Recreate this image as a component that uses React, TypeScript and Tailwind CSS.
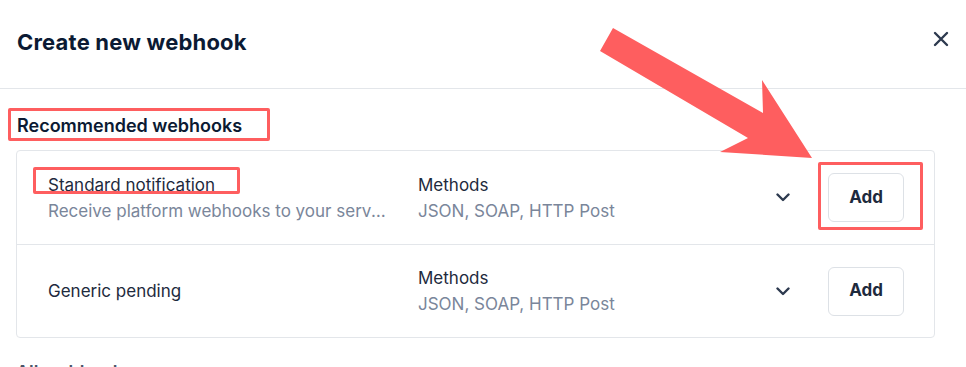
import React from 'react';

const rows = [
  {
    name: 'Standard notification',
    desc: 'Receive platform webhooks to your server for standard events',
    highlight: true,
  },
  { name: 'Generic pending', desc: '', highlight: false },
];

const Chevron = () => (
  <svg width="14" height="9" viewBox="0 0 14 9" fill="none">
    <path d="M1.5 1.5L7 7L12.5 1.5" stroke="#2d3a4f" strokeWidth="2.4" strokeLinecap="round" strokeLinejoin="round" />
  </svg>
);

const CloseIcon = () => (
  <svg width="16" height="16" viewBox="0 0 16 16" fill="none">
    <path d="M2 2L14 14M14 2L2 14" stroke="#2d3a4f" strokeWidth="2.4" strokeLinecap="round" />
  </svg>
);

const App = () => {
  return (
    <main
      className="relative h-[367px] w-[966px] overflow-hidden bg-white text-[#0b1a33]"
      style={{ fontFamily: 'Inter, "Noto Sans", sans-serif' }}
    >
      {/* Header */}
      <header className="flex h-[89px] items-center justify-between border-b border-[#e3e6ea] pl-[17px] pr-[13px]">
        <h1 className="-mt-[4px] text-[22px] font-bold tracking-[0.2px] text-[#0b1a33]">Create new webhook</h1>
        <button className="-mt-[11px] flex h-6 w-6 items-center justify-center">
          <CloseIcon />
        </button>
      </header>

      {/* Recommended */}
      <section className="pl-4 pr-[31px]">
        <div className="relative h-[61px] pl-px pt-[25px]">
          <h2 className="text-[18px] font-semibold leading-[24px] text-[#0b1a33]">Recommended webhooks</h2>
          <div className="absolute left-[-8px] top-[19px] h-[33px] w-[262px] rounded-[2px] border-[3px] border-[#fe5e5f]" />
        </div>

        <div className="rounded-[4px] border border-[#e3e6ea]">
          {rows.map((row, i) => (
            <div
              key={row.name}
              className={`flex h-[93px] items-center pl-[31px] pr-[30px] ${i > 0 ? 'border-t border-[#e3e6ea]' : ''}`}
            >
              <div className="relative w-[370px] pr-[27px]">
                <div className="text-[17px] leading-[26px] text-[#1e2a3d]">{row.name}</div>
                {row.desc && (
                  <div className="truncate text-[17px] leading-[26px] text-[#7a869a]">{row.desc}</div>
                )}
                {row.highlight && (
                  <div className="absolute left-[-15px] top-[-5px] h-[27px] w-[207px] rounded-[2px] border-[3px] border-[#fe5e5f]" />
                )}
              </div>
              <div className="flex-1">
                <div className="text-[17px] leading-[26px] text-[#1e2a3d]">Methods</div>
                <div className="text-[17px] leading-[26px] text-[#7a869a]">JSON, SOAP, HTTP Post</div>
              </div>
              <div className="mr-[38px] flex items-center">
                <Chevron />
              </div>
              <div className="relative">
                <button className="h-[49px] w-[76px] rounded-[6px] border border-[#dde1e6] bg-white text-[17px] font-bold text-[#1e2a3d]">
                  Add
                </button>
                {row.highlight && (
                  <div className="absolute left-[-10px] top-[-11px] h-[68px] w-[105px] rounded-[2px] border-[3px] border-[#fe5e5f]" />
                )}
              </div>
            </div>
          ))}
        </div>

        <h2 className="mt-[21px] text-[18px] font-semibold text-[#4a5568]">All webhooks</h2>
      </section>

      {/* Annotation arrow */}
      <svg className="pointer-events-none absolute left-0 top-0" width="966" height="367">
        <polygon
          points="613,28 763,113 762,80 812,158 720,152 748,138 600,51"
          fill="#fe5e5f"
        />
      </svg>
    </main>
  );
};

export default App;
